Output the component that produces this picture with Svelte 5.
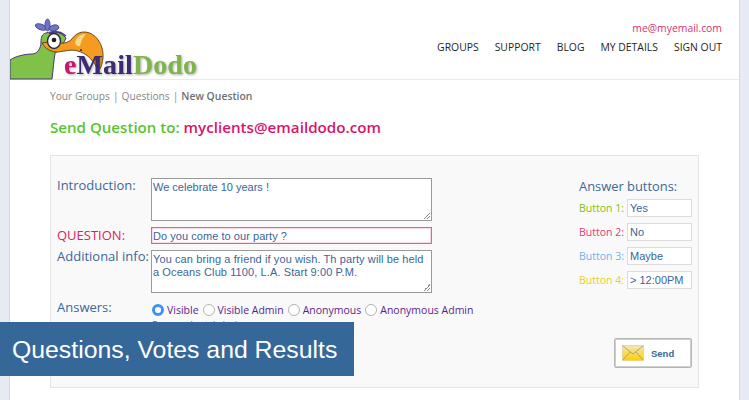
<script>
  const crumbs = ['Your Groups', 'Questions'];
  const nav = ['GROUPS', 'SUPPORT', 'BLOG', 'MY DETAILS', 'SIGN OUT'];
  const radios = ['Visible', 'Visible Admin', 'Anonymous', 'Anonymous Admin'];
  const buttons = [
    { label: 'Button 1:', value: 'Yes', cls: 'b1' },
    { label: 'Button 2:', value: 'No', cls: 'b2' },
    { label: 'Button 3:', value: 'Maybe', cls: 'b3' },
    { label: 'Button 4:', value: '> 12:00PM', cls: 'b4' }
  ];
</script>

<div class="page">
  <header class="head">
    <svg class="logo" width="190" height="71" viewBox="10 9 190 71" aria-label="eMailDodo">
      <g fill="#6d76c4" stroke="#4a3f8f" stroke-width="0.8">
        <ellipse cx="41" cy="27" rx="6" ry="2.8" transform="rotate(20 41 27)"/>
        <ellipse cx="47.5" cy="25" rx="2.6" ry="6"/>
        <ellipse cx="54" cy="28" rx="5" ry="3" transform="rotate(-15 54 28)"/>
      </g>
      <path d="M10 79V60C16 56 25 54 33 54C38 53 41 48 41 42C41 37 42 34 46 33C52 31 60 31 66 38L60 50L55 53C54 60 53 70 52 79Z" fill="#80c14a" stroke="#4a3577" stroke-width="1"/>
      <path d="M42 43C46 50 52 52 58 52C66 51 72 49 78 51C85 53 92 58 97 68L100 69C103 63 104 55 102 48C99 38 92 32 84 32C78 32 74 36 71 40C66 44 60 44 55 41Z" fill="#f39c1f" stroke="#5e3a12" stroke-width="0.9"/>
      <path d="M75 43C76 37 81 34 86 34C83 37 81 41 80 46C78 47 76 45 75 43Z" fill="#fbd98a"/>
      <ellipse cx="54" cy="41" rx="6.5" ry="7.5" fill="#fff" stroke="#2c2a3a" stroke-width="1.4"/>
      <circle cx="54" cy="40" r="2.3" fill="#1d1b28"/>
      <path d="M49 33.5C54 31 60 31 66 36" fill="none" stroke="#4a3577" stroke-width="1.4"/>
      <circle cx="81" cy="50" r="1.1" fill="#4b2a10"/>
      <text x="64" y="74" class="lg"><tspan fill="#c2186f">e</tspan><tspan fill="#3c2a73">Mail</tspan><tspan fill="#7fb548">Dodo</tspan></text>
    </svg>
    <div class="head-right">
      <a class="mail" href="#m">me@myemail.com</a>
      <nav class="nav">
        {#each nav as item}
          <a href="#n">{item}</a>
        {/each}
      </nav>
    </div>
  </header>

  <main class="body">
    <p class="crumbs">
      {#each crumbs as c}<span>{c}</span><span class="sep">|</span>{/each}<b>New Question</b>
    </p>
    <h1 class="title">Send Question to: <em>myclients@emaildodo.com</em></h1>

    <section class="panel">
      <div class="left">
        <div class="row r-intro">
          <label for="intro">Introduction:</label>
          <div class="field ta1" id="intro">We celebrate 10 years !<i class="grip"></i></div>
        </div>
        <div class="row r-q">
          <label class="q" for="qq">QUESTION:</label>
          <div class="field qf" id="qq">Do you come to our party ?</div>
        </div>
        <div class="row r-add">
          <label for="add">Additional info:</label>
          <div class="field ta2" id="add">You can bring a friend if you wish. Th party will be held a Oceans Club 1100, L.A. Start 9:00 P.M.<i class="grip"></i></div>
        </div>
        <div class="row r-ans">
          <span class="lab">Answers:</span>
          <div class="ans">
            <div class="radios">
              {#each radios as r, i}
                <span class="radio" class:on={i === 0}></span><span class="rt">{r}</span>
              {/each}
            </div>
            <div class="hint">Respondents' choices</div>
          </div>
        </div>
      </div>

      <div class="right">
        <h2>Answer buttons:</h2>
        {#each buttons as b}
          <div class="btn-row">
            <span class={b.cls}>{b.label}</span>
            <div class="mini">{b.value}</div>
          </div>
        {/each}
        <button class="send" type="button">
          <svg width="22" height="16" viewBox="0 0 22 16">
            <defs>
              <linearGradient id="env" x1="0" y1="0" x2="0" y2="1">
                <stop offset="0" stop-color="#f2e8b8"/>
                <stop offset="1" stop-color="#ffd000"/>
              </linearGradient>
            </defs>
            <rect x="0.5" y="0.5" width="21" height="15" fill="url(#env)" stroke="#d9c98a" stroke-width="0.6"/>
            <path d="M1 1l10 8 10-8M1 15l7-8M21 15l-7-8" fill="none" stroke="#a89c74" stroke-width="0.9"/>
          </svg>
          <span>Send</span>
        </button>
      </div>
    </section>
  </main>

  <div class="banner">Questions, Votes and Results</div>
</div>

<style>
  :global(body) {
    margin: 0;
    background: #e6eaf3;
    overflow: hidden;
  }
  .page {
    width: 729px;
    height: 400px;
    margin-left: 10px;
    background: #fff;
    box-shadow: -1px 0 0 #d6d8de, 1px 0 0 #d6d8de;
    font-family: "Open Sans", "Noto Sans", sans-serif;
    overflow: hidden;
  }
  .head {
    height: 79px;
    border-bottom: 1px solid #eaeaea;
    display: flex;
    justify-content: space-between;
  }
  .logo {
    display: block;
    margin-top: 9px;
  }
  .lg {
    font-family: "Liberation Serif", serif;
    font-weight: 700;
    font-size: 28px;
    letter-spacing: 0.1px;
    filter: drop-shadow(1px 1px 1px rgba(70, 70, 70, 0.45));
  }
  .head-right {
    display: flex;
    flex-direction: column;
    align-items: flex-end;
    padding: 21px 17px 0 0;
  }
  .mail {
    color: #d9316f;
    font-size: 10.4px;
    line-height: 14px;
    text-decoration: none;
  }
  .nav {
    display: flex;
    gap: 16px;
    margin-top: 5px;
  }
  .nav a {
    color: #1f2328;
    font-size: 10.4px;
    line-height: 15px;
    text-decoration: none;
  }
  .body {
    padding: 0 40px 0 40px;
  }
  .crumbs {
    margin: 0;
    padding-top: 9px;
    font-size: 10.2px;
    line-height: 15px;
    color: #83878c;
  }
  .sep {
    margin: 0 3px;
  }
  .crumbs b {
    color: #6d6f73;
    font-weight: 600;
    font-size: 10.4px;
  }
  .title {
    margin: 13px 0 0;
    font-size: 15.1px;
    line-height: 20px;
    font-weight: 600;
    color: #58c52c;
  }
  .title em {
    font-style: normal;
    font-size: 15.2px;
    color: #d8146b;
  }
  .panel {
    margin-top: 18px;
    height: 231px;
    background: #f9f9f9;
    border: 1px solid #e4e4e4;
    display: flex;
    justify-content: space-between;
  }
  .left {
    padding: 22px 0 0 6px;
    width: 440px;
  }
  .row {
    display: flex;
  }
  .row label,
  .lab {
    width: 94px;
    flex: none;
    font-size: 13px;
    line-height: 18px;
    color: #3d6797;
  }
  .r-intro label { margin-top: -2px; }
  .r-q label { margin-top: -1px; }
  .r-add label { margin-top: -3px; }
  .row label.q {
    color: #d8245f;
  }
  .field {
    box-sizing: border-box;
    width: 281px;
    background: #fff;
    color: #3a659a;
    font-family: "Liberation Sans", sans-serif;
    font-size: 11px;
    line-height: 13px;
    border: 1px solid #9a9a9a;
    padding: 2px 1px;
    position: relative;
  }
  .ta1 {
    height: 43px;
  }
  .ta2 {
    height: 43px;
    padding: 2px 3px 0 1px;
    letter-spacing: 0.1px;
  }
  .field.qf {
    height: 17px;
    border: 1px solid #e4608f;
    box-shadow: inset 0 0 0 0.5px #f3b6cc;
    padding: 2px 1px 0;
    letter-spacing: 0.05px;
  }
  .r-q {
    margin-top: 6px;
  }
  .r-add {
    margin-top: 6px;
  }
  .r-ans {
    margin-top: 5px;
  }
  .grip {
    position: absolute;
    right: 1px;
    bottom: 1px;
    width: 7px;
    height: 7px;
    background: linear-gradient(135deg, transparent 50%, #888 50%, #888 58%, transparent 58%, transparent 72%, #888 72%, #888 80%, transparent 80%);
  }
  .ans {
    padding: 5px 0 0 1px;
  }
  .radios {
    display: flex;
    align-items: center;
    height: 14px;
  }
  .radio {
    box-sizing: border-box;
    width: 12px;
    height: 12px;
    border-radius: 50%;
    border: 1px solid #b4b4b4;
    background: #fff;
    flex: none;
    margin-right: 3px;
  }
  .radio.on {
    border: 3.5px solid #3d92f5;
  }
  .rt {
    font-size: 10.5px;
    color: #5a1f8e;
    margin-right: 4px;
    line-height: 14px;
  }
  .hint {
    font-size: 10px;
    line-height: 14px;
    color: #777;
    margin-top: 1px;
  }
  .right {
    box-sizing: border-box;
    width: 119px;
    padding: 22px 6px 0 0;
    display: flex;
    flex-direction: column;
    align-items: flex-end;
  }
  .right h2 {
    margin: 0 0 4px;
    width: 100%;
    font-size: 12.9px;
    line-height: 17px;
    font-weight: 400;
    color: #3d6797;
    white-space: nowrap;
  }
  .btn-row {
    display: flex;
    align-items: center;
    justify-content: space-between;
    width: 100%;
    height: 18px;
    margin-bottom: 6px;
    font-size: 10.5px;
  }
  .b1 { color: #86c00e; }
  .b2 { color: #dd3c78; }
  .b3 { color: #6fb2ee; }
  .b4 { color: #e6cf2b; }
  .mini {
    box-sizing: border-box;
    width: 65px;
    height: 18px;
    background: #fff;
    border: 1px solid #dcdcdc;
    color: #3a659a;
    font-family: "Liberation Sans", sans-serif;
    font-size: 11px;
    line-height: 17px;
    padding-left: 2px;
  }
  .send {
    margin-top: 43px;
    box-sizing: border-box;
    width: 78px;
    height: 30px;
    background: #fff;
    border: 1px solid #b5b5b5;
    box-shadow: inset 0 0 0 1px #cfcfcf;
    border-radius: 2px;
    padding: 0 0 0 7px;
    display: flex;
    align-items: center;
    gap: 7px;
    color: #35689c;
    font-family: "Liberation Sans", sans-serif;
    font-weight: 700;
    font-size: 9.5px;
  }
  .banner {
    position: absolute;
    left: 0;
    top: 322px;
    width: 354px;
    height: 54px;
    background: #356899;
    color: #fff;
    font-family: "Liberation Sans", sans-serif;
    font-size: 24.8px;
    line-height: 55px;
    padding-left: 12px;
    box-sizing: border-box;
    white-space: nowrap;
  }
</style>
